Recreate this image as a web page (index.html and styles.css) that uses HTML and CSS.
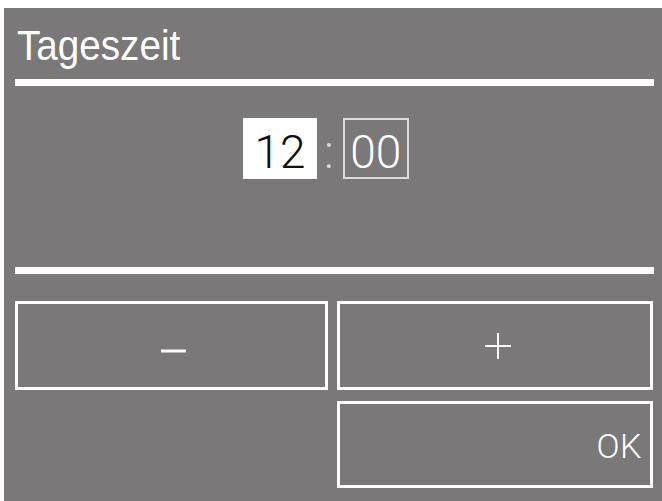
FILE: index.html
```html
<!DOCTYPE html>
<html lang="de">
<head>
<meta charset="utf-8">
<title>Tageszeit</title>
<link rel="stylesheet" href="styles.css">
</head>
<body>
<div class="panel">
  <header class="title-row">
    <h1 class="title"><span class="title-text">Tageszeit</span></h1>
  </header>
  <div class="rule"></div>
  <div class="time-row">
    <div class="field field-active">12</div>
    <div class="colon">:</div>
    <div class="field field-idle">00</div>
  </div>
  <div class="rule rule-2"></div>
  <div class="buttons">
    <button class="btn btn-center" aria-label="minus">
      <svg class="icon-minus" width="25" height="4" viewBox="0 0 25 4"><rect x="0" y="0.5" width="25" height="3" fill="#fff"/></svg>
    </button>
    <button class="btn btn-center" aria-label="plus">
      <svg class="icon-plus" width="26" height="26" viewBox="0 0 26 26"><rect x="0" y="12" width="26" height="2" fill="#fff"/><rect x="12" y="0" width="2" height="26" fill="#fff"/></svg>
    </button>
    <div class="spacer"></div>
    <button class="btn btn-ok">OK</button>
  </div>
</div>
</body>
</html>
```

FILE: styles.css
```css
html, body {
  margin: 0;
  padding: 0;
  background: #ffffff;
}

body {
  width: 662px;
  height: 501px;
  overflow: hidden;
  font-family: "Liberation Sans", Arial, sans-serif;
}

.panel {
  margin: 8px 0 0 4px;
  width: 658px;
  height: 493px;
  background: #7a7879;
  box-sizing: border-box;
  padding: 0 8px 0 11px;
  display: flex;
  flex-direction: column;
}

.title-row {
  margin-top: 14px;
  height: 48px;
  margin-bottom: 9px;
}

.title {
  margin: 0;
  padding-left: 2px;
  font-size: 42px;
  line-height: 48px;
  font-weight: normal;
  color: #ffffff;
}

.title-text {
  display: inline-block;
  transform: scaleX(0.92);
  transform-origin: left center;
}

.rule {
  height: 7px;
  background: #ffffff;
  flex: none;
}

.time-row {
  margin-top: 32px;
  display: flex;
  padding-left: 228px;
  height: 61px;
}

.field {
  box-sizing: border-box;
  height: 61px;
  padding-top: 8px;
  line-height: 53px;
  font-family: Roboto, "Liberation Sans", sans-serif;
  font-weight: 300;
  font-size: 46px;
  text-align: center;
}

.field-active {
  width: 74px;
  background: #ffffff;
  color: #111111;
}

.field-idle {
  width: 66px;
  border: 2px solid #dcdcdc;
  padding-top: 6px;
  line-height: 53px;
  color: #ffffff;
}

.colon {
  box-sizing: border-box;
  height: 61px;
  padding-top: 8px;
  line-height: 53px;
  font-family: Roboto, "Liberation Sans", sans-serif;
  font-weight: 300;
  font-size: 46px;
  color: #d9d9d9;
  margin: 0 9px 0 7px;
}

.rule-2 {
  margin-top: 88px;
}

.buttons {
  margin-top: 27px;
  display: grid;
  grid-template-columns: 313px 316px;
  grid-template-rows: 89px 87px;
  column-gap: 9px;
  row-gap: 11px;
}

.btn {
  box-sizing: border-box;
  margin: 0;
  padding: 0;
  background: transparent;
  border: 3px solid #ffffff;
  color: #ffffff;
  font-family: Roboto, "Liberation Sans", Arial, sans-serif;
  font-weight: 300;
}

.btn-center {
  display: flex;
  align-items: center;
  justify-content: center;
}

.icon-minus {
  margin-left: 4px;
  margin-top: 11px;
}

.icon-plus {
  margin-left: 5px;
  margin-top: 1px;
}

.btn-ok {
  display: flex;
  align-items: flex-start;
  justify-content: flex-end;
  padding: 25px 8px 0 0;
  font-size: 34px;
  line-height: 34px;
  letter-spacing: 0.5px;
}
```
